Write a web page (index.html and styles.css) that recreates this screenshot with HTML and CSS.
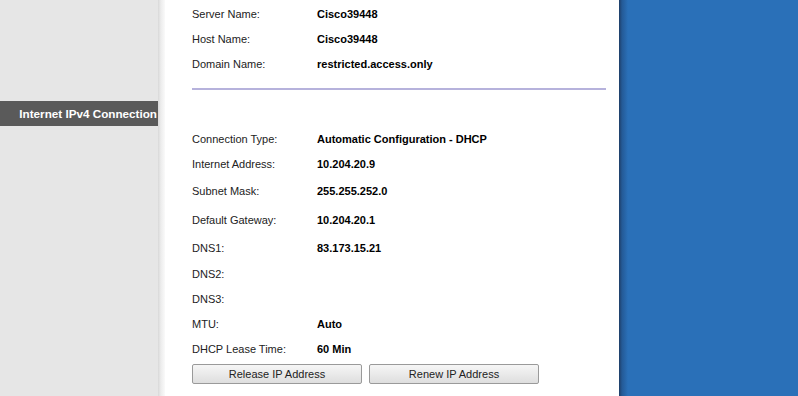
FILE: index.html
```html
<!DOCTYPE html>
<html lang="en">
<head>
    <meta charset="UTF-8">
    <title>Internet IPv4 Connection</title>
    <link rel="stylesheet" href="styles.css">
</head>
<body>
    <div class="page">
        <div class="sidebar">
            <div class="side-title">Internet IPv4 Connection</div>
        </div>
        <div class="side-shadow"></div>
        <div class="content">
            <div class="section">
                <div class="row"><div class="label">Server Name:</div><div class="value">Cisco39448</div></div>
                <div class="row"><div class="label">Host Name:</div><div class="value">Cisco39448</div></div>
                <div class="row"><div class="label">Domain Name:</div><div class="value">restricted.access.only</div></div>
            </div>
            <div class="divider"></div>
            <div class="section second">
                <div class="row"><div class="label">Connection Type:</div><div class="value">Automatic Configuration - DHCP</div></div>
                <div class="row"><div class="label">Internet Address:</div><div class="value">10.204.20.9</div></div>
                <div class="row tall"><div class="label">Subnet Mask:</div><div class="value">255.255.252.0</div></div>
                <div class="row mid"><div class="label">Default Gateway:</div><div class="value">10.204.20.1</div></div>
                <div class="row dns"><div class="label">DNS1:</div><div class="value">83.173.15.21</div></div>
                <div class="row"><div class="label">DNS2:</div><div class="value"></div></div>
                <div class="row"><div class="label">DNS3:</div><div class="value"></div></div>
                <div class="row"><div class="label">MTU:</div><div class="value">Auto</div></div>
                <div class="row"><div class="label">DHCP Lease Time:</div><div class="value">60 Min</div></div>
            </div>
            <div class="buttons">
                <button class="btn">Release IP Address</button>
                <button class="btn">Renew IP Address</button>
            </div>
        </div>
        <div class="blue"></div>
    </div>
</body>
</html>
```

FILE: styles.css
```css
html, body {
    margin: 0;
    padding: 0;
    height: 100%;
    overflow: hidden;
}
body {
    font-family: Arial, "Liberation Sans", sans-serif;
    font-size: 11px;
    color: #1a1a1a;
    background-color: #fff;
}
.page {
    display: flex;
    height: 396px;
}
.sidebar {
    width: 158px;
    background-color: #e6e6e6;
    padding-top: 101px;
    box-sizing: border-box;
}
.side-title {
    height: 25px;
    line-height: 25px;
    background-color: #5a5a5a;
    color: #fff;
    font-size: 11.7px;
    font-weight: bold;
    text-align: right;
    padding-right: 1px;
    white-space: nowrap;
}
.side-shadow {
    width: 7px;
    background: linear-gradient(to right, #d8d8d8, #ececec 40%, #fafafa);
}
.content {
    width: 454px;
    padding: 1px 0 0 27px;
    box-sizing: border-box;
    background-color: #fff;
}
.row {
    display: flex;
    align-items: center;
    height: 25px;
}
.row.tall {
    height: 30px;
}
.row.mid {
    height: 28px;
}
.row.dns {
    height: 27px;
}
.label {
    width: 125px;
    color: #222;
}
.value {
    font-weight: bold;
    color: #000;
}
.divider {
    margin-top: 12px;
    width: 414px;
    height: 2px;
    background-color: #b6b2dc;
}
.second {
    margin-top: 36px;
}
.buttons {
    display: flex;
    gap: 7px;
    margin-top: 3px;
}
.btn {
    width: 170px;
    height: 20px;
    padding: 0;
    font-family: Arial, "Liberation Sans", sans-serif;
    font-size: 11px;
    color: #222;
    background: linear-gradient(to bottom, #f6f6f6, #dedede);
    border: 1px solid #9a9a9a;
    border-radius: 2px;
}
.blue {
    flex: 1;
    background: linear-gradient(to right, #1e3d66, #245a96 3px, #2a70b8 9px);
}
```
